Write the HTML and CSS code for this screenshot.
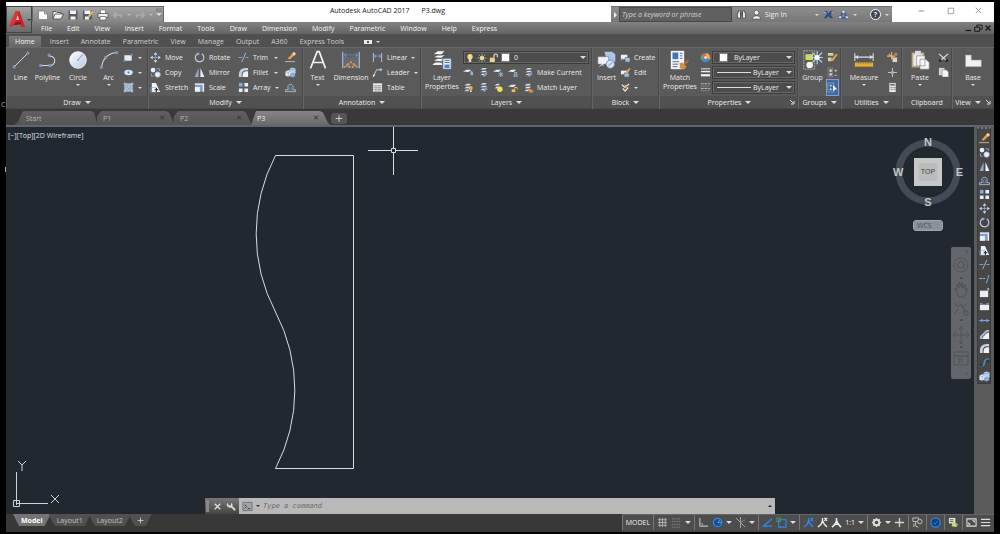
FILE: index.html
```html
<!DOCTYPE html>
<html lang="en">
<head>
<meta charset="utf-8">
<title>Autodesk AutoCAD 2017 - P3.dwg</title>
<link rel="stylesheet" href="styles.css">
</head>
<body>
<svg class="sprite" aria-hidden="true">
  <defs>
    <linearGradient id="ball" x1="0" y1="0" x2="1" y2="1"><stop offset="0" stop-color="#fff"/><stop offset="1" stop-color="#b5c9de"/></linearGradient>
  </defs>
  <!-- quick access -->
  <symbol id="new" viewBox="0 0 12 12"><path d="M1.5 2h6l3 3v5.5h-9z" fill="#fafafa" stroke="#666" stroke-width=".6"/><path d="M7.5 2v3h3" fill="#bbb" stroke="#666" stroke-width=".6"/></symbol>
  <symbol id="open" viewBox="0 0 12 12"><path d="M1 10V2.5h3l1 1h4V5" fill="#eee" stroke="#444" stroke-width=".8"/><path d="M1 10l2-5h8.500l-2.500 5z" fill="#f5f5f5" stroke="#444" stroke-width=".8"/></symbol>
  <symbol id="save" viewBox="0 0 12 12"><path d="M1.500 1.500h9v9h-9z" fill="#555d68"/><path d="M3 1.500h6v3.500H3zM3.500 7.500h5v3h-5z" fill="#f4f4f4"/></symbol>
  <symbol id="saveas" viewBox="0 0 12 12"><path d="M1 1.500h9v9H1z" fill="#555d68"/><path d="M2.500 1.500h6V5h-6zM3 7.500h4v3H3z" fill="#f4f4f4"/><path d="M5 8l5-6 1.500 1L7 9z" fill="#efb75b"/></symbol>
  <symbol id="print" viewBox="0 0 12 12"><path d="M3.500 1h5v4h-5z" fill="#fff" stroke="#555" stroke-width=".5"/><path d="M1 4.500h10v4H1z" fill="#eee" stroke="#444" stroke-width=".7"/><path d="M3 7.500h6v3.500H3z" fill="#fff" stroke="#555" stroke-width=".7"/></symbol>
  <symbol id="undo" viewBox="0 0 12 12"><path d="M4.500 3L1.500 6l3 3M2 6h7v2.500" fill="none" stroke="#aeaeae" stroke-width="1.500"/></symbol>
  <symbol id="redo" viewBox="0 0 12 12"><path d="M7.500 3l3 3-3 3M10 6H3v2.500" fill="none" stroke="#aeaeae" stroke-width="1.500"/></symbol>
  <symbol id="binoc" viewBox="0 0 12 12"><path d="M1.500 10V5.500L3 2h2v8zM10.500 10V5.500L9 2H7v8zM5 4.500h2v2H5z" fill="#e8e8e8" stroke="#333" stroke-width=".8"/></symbol>
  <symbol id="person" viewBox="0 0 12 12"><circle cx="6" cy="4" r="2.600" fill="#f2f2f2" stroke="#444" stroke-width=".7"/><path d="M1.500 11q0-3 3-3.500h3q3 .5 3 3.500z" fill="#f2f2f2" stroke="#444" stroke-width=".7"/></symbol>
  <symbol id="exchange" viewBox="0 0 12 12"><path d="M1 2h3l2 2.500L8 2h3L8.500 6 11 10H8L6 7.500 4 10H1l2.500-4z" fill="#2f4d83"/><path d="M1 3.500h2l1 2M11 3.500H9" stroke="#dbe5f5" stroke-width=".7" fill="none"/></symbol>
  <symbol id="a360" viewBox="0 0 12 12"><path d="M6 2L2 9.500h8z" fill="none" stroke="#33548d" stroke-width="1.500"/><circle cx="6" cy="3" r="1.800" fill="#dde6f3" stroke="#33548d" stroke-width=".6"/><circle cx="2.300" cy="9" r="1.600" fill="#dde6f3" stroke="#33548d" stroke-width=".6"/><circle cx="9.700" cy="9" r="1.600" fill="#dde6f3" stroke="#33548d" stroke-width=".6"/></symbol>
  <!-- draw -->
  <symbol id="line" viewBox="0 0 24 24"><path d="M4 20L20 4" stroke="#d8d8d8" stroke-width="1.200"/><path d="M2.500 19h2.500v2.500H2.500zM19 2.500h2.500V5H19z" fill="#5d7fae" stroke="#9bb7dc" stroke-width=".7"/></symbol>
  <symbol id="pline" viewBox="0 0 24 24"><path d="M3 18.500h11.500a5.600 5.600 0 0 0 0-11.200L13 6" fill="none" stroke="#d8d8d8" stroke-width="1.300"/><path d="M2 17.500h2.500V20H2zM13 17.500h2.500V20H13zM12 5h2.500v2.500H12z" fill="#5d7fae" stroke="#9bb7dc" stroke-width=".7"/></symbol>
  <symbol id="circle" viewBox="0 0 24 24"><circle cx="12" cy="12" r="10" fill="url(#ball)" stroke="#f6f6f6"/><path d="M12 12l6-7" stroke="#6289b8" stroke-width="1"/><circle cx="12" cy="12" r="1" fill="#6289b8"/></symbol>
  <symbol id="arc" viewBox="0 0 24 24"><path d="M3 21Q5 5 21 3" fill="none" stroke="#d8d8d8" stroke-width="1.300"/><path d="M1.500 19.500H4V22H1.500zM7 7.500h2.500V10H7zM20 2h2.500v2.500H20z" fill="#5d7fae" stroke="#9bb7dc" stroke-width=".7"/></symbol>
  <symbol id="rect" viewBox="0 0 12 12"><path d="M1.500 3.500h8v6h-8z" fill="#e6edf5"/><path d="M8.500 2h2v2h-2zM.5 8.500h2v2h-2z" fill="#6d94c8"/></symbol>
  <symbol id="ellipse" viewBox="0 0 12 12"><ellipse cx="6" cy="6" rx="4.700" ry="3" fill="#dfe9f3"/><path d="M5 5h2v2H5zM.3 5h1.500v2H.3zM10.200 5h1.500v2h-1.500zM5 2h2v1.500H5z" fill="#5580ba"/></symbol>
  <symbol id="hatch" viewBox="0 0 12 12"><path d="M2 2h8v8H2z" fill="#86a4cb"/><path d="M2 5l3-3M2 8l6-6M2 10l8-8M5 10l5-5M8 10l2-2M.5 2h11M.5 10h11M2 .5v11M10 .5v11" stroke="#dce6f2" stroke-width=".7"/></symbol>
  <!-- modify -->
  <symbol id="move" viewBox="0 0 12 12"><path d="M6 .3L8 3H4zM6 11.700L8 9H4zM.3 6L3 4v4zM11.700 6L9 4v4z" fill="#dce7f5"/><path d="M6 3v6M3 6h6" stroke="#86a9d8" stroke-width=".8"/><path d="M5 5h2v2H5z" fill="#7aa0d2"/></symbol>
  <symbol id="copy" viewBox="0 0 12 12"><circle cx="3.300" cy="3.300" r="2.600" fill="#e9eff6"/><circle cx="8.300" cy="8.300" r="3" fill="#e9eff6" stroke="#8aa8ce" stroke-width=".8"/><path d="M7 2h3.500v2.500M1.500 7v3H4" fill="none" stroke="#8aa8ce"/></symbol>
  <symbol id="stretch" viewBox="0 0 12 12"><path d="M2 1h4.500L11 11H2z" fill="#edf2f7"/><path d="M1 6h6v5H1z" fill="none" stroke="#87a7cf" stroke-width=".7"/><path d="M5 8.500h4M7 6.500v4" stroke="#222" stroke-width="1.200"/></symbol>
  <symbol id="rotate" viewBox="0 0 12 12"><path d="M8.500 2A4.700 4.700 0 1 1 4 1.800" fill="none" stroke="#c7d3e3" stroke-width="1.200"/><path d="M3 .2l3.500 1.300L4 4z" fill="#8fb0dc"/></symbol>
  <symbol id="mirror" viewBox="0 0 12 12"><path d="M5 1v10H.7z" fill="#8faac9"/><path d="M7 1v10h4.300z" fill="#edf2f7"/></symbol>
  <symbol id="scale" viewBox="0 0 12 12"><path d="M1 1.500h10v9H1z" fill="#7e9fca"/><path d="M1 1.500h10V3H1zM9.500 1.500H11v9H9.500zM1 5.500h5.500v5H1z" fill="#edf2f7"/></symbol>
  <symbol id="trim" viewBox="0 0 12 12"><path d="M.5 6h4M8 6h3.500" stroke="#6fa0e0" stroke-width="1.200"/><path d="M4 11L8.500 1" stroke="#aeb9c7" stroke-width="1"/></symbol>
  <symbol id="fillet" viewBox="0 0 12 12"><path d="M1 11V8.500Q1 1 8.500 1H11v2.500H9Q4 3.500 4 9v2z" fill="#c3d3e6"/><path d="M5 11V9q0-4.500 4.500-4.500H11V11z" fill="#f0f3f6"/></symbol>
  <symbol id="array" viewBox="0 0 12 12"><path d="M1 1h4v4H1z" fill="#7eabe4"/><path d="M7 1h4v4H7zM1 7h4v4H1zM7 7h4v4H7z" fill="#e6edf5"/></symbol>
  <symbol id="erase" viewBox="0 0 12 12"><path d="M3 7l6.500-7L12 2 5 8.500z" fill="#e9a24c"/><path d="M8 2l1.500-2L12 2l-2 2z" fill="#f6d79a"/><path d="M1.500 9.500L3 7l2 1.500z" fill="#c23e32"/><path d="M0 10.500h11" stroke="#c8c8c8" stroke-width=".9"/></symbol>
  <symbol id="explode" viewBox="0 0 12 12"><path d="M5 2l3-1.500 3.500 1V7L8 8.500 5 7z" fill="#b9d0eb"/><path d="M.5 5l3-1.500 3 1V9l-3 1.500-3-1z" fill="#e4eef9"/><path d="M5.500 7l3-1 2.500 1v3L8 11.500 5.500 10z" fill="#89aedb"/><path d="M.5 5l3 1 3-1.500M3.500 6v4.500M5 2l3 1 3.500-1.500" stroke="#5f82ad" stroke-width=".5" fill="none"/></symbol>
  <symbol id="offset" viewBox="0 0 12 12"><path d="M.5 10.500v-2h3q-1.500-6 2.500-6t2.500 6h3v2z" fill="none" stroke="#a7bad2" stroke-width="1"/><path d="M5 8.500q-.5-4 1-4t1 4z" fill="none" stroke="#6685ae" stroke-width=".9"/></symbol>
  <!-- annotation -->
  <symbol id="text" viewBox="0 0 24 24"><path d="M3 22L11 2h2.500L21 22M6 15h12" fill="none" stroke="#f1f1f1" stroke-width="2"/></symbol>
  <symbol id="dim" viewBox="0 0 24 24"><path d="M2 8h20v14H2z" fill="#68696c"/><path d="M2 2v20M22 2v20" stroke="#9eb7d6" stroke-width="1.500"/><path d="M3 6h18M3 6l3-2v4zM21 6l-3-2v4z" stroke="#6088bd" fill="#6088bd"/><path d="M4 21l1.500-1.500M8 16l1.500 1.500M12 13.500v2.500M16 16l-1.500 1.500M20 21l-1.500-1.500M9 21l2-1.500M15 21l-2-1.500M6 18.500h2M16 18.500h2" stroke="#e0a05a" stroke-width="2" fill="none"/></symbol>
  <symbol id="linear" viewBox="0 0 12 12"><path d="M1.500 1v10M10.500 1v10" stroke="#b9cce2" stroke-width="1"/><path d="M2 4.500h8M2 4.500l2-1.500v3zM10 4.500L8 3v3z" fill="#6f99d0" stroke="#6f99d0" stroke-width=".8"/></symbol>
  <symbol id="leader" viewBox="0 0 12 12"><path d="M1.500 10.500L5 3h3" fill="none" stroke="#d8d8d8" stroke-width="1"/><path d="M.7 11.500L1.500 8l2 1z" fill="#eee"/><circle cx="9.500" cy="3" r="1.600" fill="#9cbae0"/></symbol>
  <symbol id="table" viewBox="0 0 12 12"><path d="M1 1.500h10v9H1z" fill="#f2f2f2"/><path d="M1 4h10M1 6.300h10M1 8.500h10M4.300 4v6.500M7.700 4v6.500" stroke="#777" stroke-width=".7"/></symbol>
  <!-- layers -->
  <symbol id="layerprops" viewBox="0 0 24 24"><path d="M1 13l6-3h9l-5 4zM1 9l6-3h9l-5 4zM1 5l6-4h9l-5 5z" fill="#fafafa" stroke="#444" stroke-width=".8"/><path d="M1 17l3-2h6l2 1v2H1z" fill="#f2f2f2"/><path d="M13 10h10v13H13z" fill="#e9eef5" stroke="#556a85"/><path d="M15 12.500h6M15 15h6" stroke="#51719b" stroke-width="1.200"/><path d="M15 17.500h6v4h-6z" fill="#4f7db8"/></symbol>
  <symbol id="lay1" viewBox="0 0 12 12"><path d="M0 5l4-2h5L6 5.500z" fill="#f1f1f1"/><path d="M8 4q3 0 3 3v2H8V7z" fill="#8badda"/></symbol>
  <symbol id="lay2" viewBox="0 0 12 12"><path d="M2 3l3-2h5L8 3zM2 6l3-2h5L8 6zM2 9l3-2h5L8 9z" fill="#eef1f5" stroke="#445" stroke-width=".4"/><path d="M5 10l5-5v3l-3 3z" fill="#77a0d6"/></symbol>
  <symbol id="lay3" viewBox="0 0 12 12"><path d="M1 4l3-2h5L7 4zM1 7l3-2h5L7 7zM1 10l3-2h3L6 10z" fill="#eef1f5" stroke="#445" stroke-width=".4"/><circle cx="8.500" cy="6.500" r="2.200" fill="#e7b14f"/><path d="M7.500 9h2v2h-2z" fill="#ddd"/></symbol>
  <symbol id="lay4" viewBox="0 0 12 12"><path d="M0 5l4-2h5L6 5.500z" fill="#f1f1f1"/><path d="M4 8h4v3H4z" fill="#f0c04d"/><path d="M7 8V6h3v2" stroke="#f0c04d" fill="none"/></symbol>
  <symbol id="lay5" viewBox="0 0 12 12"><path d="M0 5l4-2h5L6 5.500z" fill="#f1f1f1"/><path d="M8.500 5v6M6 6.500l5 3M11 6.500l-5 3" stroke="#8fc0f0" stroke-width="1"/></symbol>
  <symbol id="lay6" viewBox="0 0 12 12"><path d="M0 5l4-2h5L6 5.500z" fill="#f1f1f1"/><path d="M6 7.500h4.500V11H6z" fill="#7f97b3"/><path d="M7 7.500V6h2.500v1.500" stroke="#aebdcd" fill="none"/></symbol>
  <symbol id="lay7" viewBox="0 0 12 12"><path d="M1 4l3-2h4L6 4zM1 7l3-2h4L6 7z" fill="#eef1f5" stroke="#445" stroke-width=".4"/><circle cx="7.500" cy="8" r="3" fill="#f3e24c"/></symbol>
  <symbol id="lay8" viewBox="0 0 12 12"><path d="M1 4l3-2h5L7 4zM1 7l3-2h5L7 7zM1 10l3-2h3L6 10z" fill="#eef1f5" stroke="#445" stroke-width=".4"/><path d="M6 7l3 1 2.500 2-1 1.500H7z" fill="#d9913f"/></symbol>
  <symbol id="bulb" viewBox="0 0 12 12"><circle cx="6" cy="4.500" r="3.200" fill="#f6da83"/><path d="M4.500 7h3v4h-3z" fill="#e4dcc0"/></symbol>
  <symbol id="sun" viewBox="0 0 12 12"><circle cx="6" cy="6" r="2.500" fill="#f3e5a5"/><path d="M6 .5v11M.5 6h11M2 2l8 8M10 2l-8 8" stroke="#e7dba7" stroke-width=".7"/></symbol>
  <symbol id="lock" viewBox="0 0 12 12"><path d="M1 5.500h6V11H1z" fill="#efd27a"/><path d="M6 5.500V3q0-1.800 2-1.800T10 3v2" fill="none" stroke="#ece1bd" stroke-width="1.300"/></symbol>
  <!-- block, properties -->
  <symbol id="insert" viewBox="0 0 24 24"><path d="M9 2h9l4 3v9H12z" fill="#a9c6e6"/><path d="M1 8h13v9H1z" fill="#edf2f8" stroke="#667" stroke-width=".6"/><circle cx="16" cy="17" r="5" fill="#d2e1f1" stroke="#6483a8"/><path d="M3 20l4-4v3" stroke="#fff" fill="none"/><path d="M13.500 19l5-4" stroke="#6483a8"/></symbol>
  <symbol id="create" viewBox="0 0 12 12"><path d="M1 3h7v5H1z" fill="#edf1f6"/><path d="M5.500 6H11v5H5.500z" fill="#a5bfdf" stroke="#555" stroke-width=".6"/><path d="M0 10l3-3" stroke="#6d96cd"/></symbol>
  <symbol id="edit" viewBox="0 0 12 12"><path d="M1 4h7v4H1z" fill="#edf1f6"/><path d="M4.500 6.500H10v4.500H4.500z" fill="#a5bfdf" stroke="#555" stroke-width=".6"/><path d="M6 6l4-5 1.500 1L8 7z" fill="#e7a851"/></symbol>
  <symbol id="attr" viewBox="0 0 12 12"><path d="M2 3l3.500 3L10 2M3 7l2.500 3L9 6" fill="none" stroke="#eee" stroke-width="1.300"/><path d="M4 5l2-2 2 2-2 2z" fill="#e9b864"/></symbol>
  <symbol id="match" viewBox="0 0 24 24"><path d="M1 1h16v22H1z" fill="#f3f5f8"/><path d="M3 3h7v8H3z" fill="#3e76bd"/><path d="M12 4h3M12 7h3M12 10h3M3 14h8M3 17h7M3 20h6" stroke="#627082" stroke-width="1.200"/><path d="M11 16l4-1 5 5-3 3q-4 0-6-2 2-2 0-5z" fill="#d78f38"/><path d="M17 15l4-4 2 2-4 5z" fill="#a8692c"/></symbol>
  <symbol id="wheel" viewBox="0 0 12 12"><path d="M6 6V1a5 5 0 0 1 4.500 7.500z" fill="#f0ad3e"/><path d="M6 6l4.500 2.500a5 5 0 0 1-9 0z" fill="#4c82d0"/><path d="M6 6L1.500 8.500A5 5 0 0 1 6 1z" fill="#d66262"/><path d="M6 6L2 3a5 5 0 0 0-.5 5.500z" fill="#58aa63"/><circle cx="6" cy="6" r="1.500" fill="#eee"/></symbol>
  <symbol id="weight" viewBox="0 0 12 12"><path d="M1 2h10" stroke="#eee"/><path d="M1 5h10" stroke="#eee" stroke-width="1.600"/><path d="M1 9h10" stroke="#eee" stroke-width="2.500"/></symbol>
  <symbol id="ltype" viewBox="0 0 12 12"><path d="M1 2h10M1 7h10" stroke="#ccc" stroke-dasharray="3 1"/><path d="M1 4.500h10M1 9.500h10" stroke="#aaa" stroke-dasharray="1 1"/></symbol>
  <!-- groups, utilities, clipboard, view -->
  <symbol id="group" viewBox="0 0 24 24"><path d="M1 1h13v22H1z" fill="none" stroke="#bbb" stroke-dasharray="2 1"/><path d="M3 5h9v7H3z" fill="#cfdc58"/><circle cx="8" cy="18" r="4" fill="#eef3f8"/><path d="M17 1v16M9 9h15M11 3l12 12M23 3L11 15" stroke="#a8d3f3" stroke-width="1.400"/><circle cx="17" cy="9" r="3" fill="#fff"/></symbol>
  <symbol id="ungroup" viewBox="0 0 12 12"><path d="M1 1h6v3H1zM1 6h4v4H1z" fill="#d6d09c"/><path d="M4 9l6-7 1.500 1-5 7z" fill="#e3a44e"/></symbol>
  <symbol id="groupedit" viewBox="0 0 12 12"><path d="M1 1h5v10H1z" fill="none" stroke="#aaa" stroke-dasharray="1 1"/><path d="M3 3h2v2H3zM3 7h2v2H3zM8 4h3M9.500 2.500v3M8 9h3" stroke="#ccc" fill="#ddd" stroke-width=".8"/></symbol>
  <symbol id="groupsel" viewBox="0 0 12 12"><path d="M1 1h6v10H1z" fill="none" stroke="#b7c8e2" stroke-dasharray="1 1"/><path d="M3 3h2v2H3zM3 7h2v2H3z" fill="#d4e59c"/><path d="M6.500 3l4.500 5-2.300.3L7 10.500z" fill="#fff"/></symbol>
  <symbol id="measure" viewBox="0 0 24 24"><path d="M1 4v9M23 4v9M1 8.500h22" stroke="#ddd" stroke-width="1.300"/><path d="M1 8.500L5 6v5zM23 8.500L19 6v5z" fill="#ddd"/><path d="M1 15h22v5H1z" fill="#e8ae2d"/><path d="M5 15v2M8 15v2M11 15v2M14 15v2M17 15v2M20 15v2" stroke="#89631a" stroke-width=".7"/></symbol>
  <symbol id="qselect" viewBox="0 0 12 12"><path d="M5 0v8M0 4.500h9M2 2l5 5" stroke="#e9b56e" stroke-width="1.200"/><path d="M6 6h5v5H6z" fill="#d5d5d5"/><path d="M8 1h3v3H8z" fill="#da7c39"/></symbol>
  <symbol id="point" viewBox="0 0 12 12"><path d="M6 1v10M1 6h10" stroke="#ccc"/><path d="M4.500 4.500h3v3h-3z" fill="#aaa"/></symbol>
  <symbol id="calc" viewBox="0 0 12 12"><path d="M2.500 1h7v10h-7z" fill="#e7e7e7"/><path d="M3.500 2h5v2h-5z" fill="#67727d"/><path d="M4 6h1M6 6h1M8 6h1M4 8h1M6 8h1M8 8h1" stroke="#555"/></symbol>
  <symbol id="paste" viewBox="0 0 24 24"><path d="M2 3h15v18H2z" fill="#bba98a"/><path d="M6 1h7v4H6z" fill="#ddd"/><path d="M4 5h11v14H4z" fill="#e8e8e8"/><path d="M8 7h10v12H8zM12 11h7l4 4v8H12z" fill="#f6f6f6" stroke="#777" stroke-width=".7"/></symbol>
  <symbol id="cut" viewBox="0 0 12 12"><path d="M1 2l8 7M11 2L3 9" stroke="#ddd" stroke-width="1.200"/><circle cx="2.500" cy="9.500" r="1.500" fill="#222"/><circle cx="9.500" cy="9.500" r="1.500" fill="#222"/></symbol>
  <symbol id="pages" viewBox="0 0 12 12"><path d="M1 1h6v8H1z" fill="#d5d5d5"/><path d="M4.500 3H9l2.500 2.500V11h-7z" fill="#f5f5f5" stroke="#666" stroke-width=".5"/></symbol>
  <symbol id="base" viewBox="0 0 24 24"><path d="M3 6h7v6h12v8H3z" fill="#f0f0f0" stroke="#999" stroke-width=".7"/></symbol>
  <symbol id="extend" viewBox="0 0 12 12"><path d="M.5 6h6" stroke="#b9c7d8" stroke-dasharray="3 1"/><path d="M8 11l3-9" stroke="#6fa0e0" stroke-width="1.200"/></symbol>
  <symbol id="break" viewBox="0 0 12 12"><path d="M1 4h10v6H1z" fill="#e8eef5"/><path d="M1 3h3M8 3h3" stroke="#86a9d8"/></symbol>
  <symbol id="breakpt" viewBox="0 0 12 12"><path d="M1 4h9v7H1z" fill="#e8eef5"/><path d="M9 1h2v3H9z" fill="#86a9d8"/></symbol>
  <symbol id="join" viewBox="0 0 12 12"><path d="M.5 6h11" stroke="#86a9d8" stroke-width="1.200"/><path d="M2.500 4L6 6 2.500 8zM9.500 4L6 6l3.500 2z" fill="#6fa0e0"/></symbol>
  <symbol id="chamfer" viewBox="0 0 12 12"><path d="M1 11V8l7-7h3v2H9L3.500 8.500V11z" fill="#a9bfd9"/><path d="M4 11V9l5-5h2v7z" fill="#f0f3f6"/></symbol>
  <symbol id="blend" viewBox="0 0 12 12"><path d="M1 9q4 2 5-3t5-3" fill="none" stroke="#5683b5" stroke-width="2"/><path d="M1 7h3v3H1zM8 3h3v3H8z" fill="#293a4e"/></symbol>
  <!-- status bar -->
  <symbol id="s-grid" viewBox="0 0 12 12"><path d="M3 1v10M6 1v10M9 1v10M1 3h10M1 6h10M1 9h10" stroke="#c9c9c9" stroke-width=".8"/></symbol>
  <symbol id="s-snap" viewBox="0 0 12 12"><path d="M1 2h10M1 5h10M1 8h10M1 11h10" stroke="#9a9a9a" stroke-dasharray="1 1"/></symbol>
  <symbol id="s-ortho" viewBox="0 0 12 12"><path d="M2 1v9h9" fill="none" stroke="#bbb" stroke-width="1.200"/><path d="M2 7h3v3" fill="none" stroke="#999"/></symbol>
  <symbol id="s-polar" viewBox="0 0 12 12"><circle cx="6" cy="6" r="4.500" fill="#1c4d83" stroke="#278cf0" stroke-width="1.300"/><path d="M6 6h5M6 6l3-3" stroke="#45a0ff"/></symbol>
  <symbol id="s-iso" viewBox="0 0 12 12"><path d="M1 1l10 10M6 0v12" stroke="#aaa"/><path d="M6 6l5-3" stroke="#8b8b8b"/></symbol>
  <symbol id="s-track" viewBox="0 0 12 12"><path d="M11 2L1.500 10H11" fill="none" stroke="#278cf0" stroke-width="1.400"/></symbol>
  <symbol id="s-osnap" viewBox="0 0 12 12"><path d="M3 3h8v8H3z" fill="none" stroke="#278cf0" stroke-width="1.200"/><path d="M1 1h4v4H1z" fill="none" stroke="#37a565"/></symbol>
  <symbol id="s-ann" viewBox="0 0 12 12"><path d="M6 1v4M6 4L4.500 8 1 11M6 4l2 4 3 3M3 8h6" fill="none" stroke="currentColor" stroke-width="1.700"/></symbol>
  <symbol id="s-anb" viewBox="0 0 12 12"><path d="M6 1v4M6 4L4.500 8 1 11M6 4l2 4 3 3M8 1l3 3M11 1L8 4" fill="none" stroke="currentColor" stroke-width="1.500"/></symbol>
  <symbol id="gear" viewBox="0 0 12 12"><circle cx="6" cy="6" r="3" fill="none" stroke="#ddd" stroke-width="2"/><path d="M6 1v2M6 9v2M1 6h2M9 6h2M2.500 2.500L4 4M8 8l1.500 1.500M9.500 2.500L8 4M4 8L2.500 9.500" stroke="#ddd" stroke-width="1.500"/></symbol>
  <symbol id="plus" viewBox="0 0 12 12"><path d="M6 1v10M1 6h10" stroke="#d5d5d5" stroke-width="1.400"/></symbol>
  <symbol id="s-iso2" viewBox="0 0 12 12"><path d="M1 1h6v4H1zM4 5v5l3 1" fill="none" stroke="#c5c5c5"/><circle cx="8.500" cy="5" r="2.500" fill="#555" stroke="#c5c5c5"/><path d="M2 7v4" stroke="#c5c5c5"/></symbol>
  <symbol id="s-hw" viewBox="0 0 12 12"><circle cx="6" cy="6" r="5" fill="#123f75" stroke="#268cf2" stroke-width="1.300"/><path d="M3.500 6l2 2 3-4" fill="none" stroke="#268cf2"/></symbol>
  <symbol id="s-img" viewBox="0 0 12 12"><path d="M1 1h7v6H1z" fill="#e5e5e5"/><path d="M2 3h4M2 5h4" stroke="#456"/><path d="M5 5l6 3-2 3-5-1z" fill="#d9df48"/><path d="M8 7l3 1-2 3z" fill="#5bb4e4"/></symbol>
  <symbol id="s-full" viewBox="0 0 12 12"><path d="M1 2h10v8H1z" fill="none" stroke="#ddd" stroke-width="1.200"/><path d="M6.500 3.500h3v3zM5.500 8.500h-3v-3z" fill="#ddd"/></symbol>
  <symbol id="s-menu" viewBox="0 0 12 12"><path d="M1 2.500h10M1 6h10M1 9.500h10" stroke="#ddd" stroke-width="1.300"/></symbol>
</svg>

<div class="desktop">
<div class="gutter" aria-hidden="true"><span>C</span><i></i></div>
<div class="app">
  <header class="head">
    <button class="logo" aria-label="Application menu">
      <svg class="mark" viewBox="0 0 18 18"><path d="M0 17L7 0h4l6 17h-4l-1.500-4H6l-2 3z" fill="#c9242b"/><path d="M7 9.500L9 4l2 5.500z" fill="#d6c6c7"/><path d="M7 0h4L6 13l-6 4z" fill="#e0343a"/><path d="M6 13l5-2 2 3-8 1z" fill="#8e1119"/></svg>
      <i class="caret dark"></i>
    </button>
    <div class="titlebar">
      <div class="qat">
        <button aria-label="New"><svg><use href="#new"/></svg></button>
        <button aria-label="Open"><svg><use href="#open"/></svg></button>
        <button aria-label="Save"><svg><use href="#save"/></svg></button>
        <button aria-label="Save as"><svg><use href="#saveas"/></svg></button>
        <button aria-label="Plot"><svg><use href="#print"/></svg></button>
        <button aria-label="Undo"><svg><use href="#undo"/></svg></button><i class="caret dim"></i>
        <button aria-label="Redo"><svg><use href="#redo"/></svg></button><i class="caret dim"></i>
        <button class="customize" aria-label="Customize"><i class="caret big"></i></button>
      </div>
      <div class="title"><span>Autodesk AutoCAD 2017</span><span>P3.dwg</span></div>
      <div class="info">
        <button class="expand" aria-label="Collapse search"><i class="side"></i></button>
        <input class="search" type="text" aria-label="Search help" placeholder="Type a keyword or phrase">
        <button aria-label="Search"><svg><use href="#binoc"/></svg></button>
        <button class="signin"><svg><use href="#person"/></svg><span>Sign In</span><i class="caret"></i></button>
        <button aria-label="Exchange"><svg><use href="#exchange"/></svg></button>
        <button aria-label="A360"><svg><use href="#a360"/></svg></button><i class="caret"></i>
        <button class="help" aria-label="Help"><span>?</span></button><i class="caret"></i>
      </div>
      <div class="winctl">
        <button aria-label="Minimize"><svg viewBox="0 0 12 12"><path d="M3 6.500h6" stroke="#888"/></svg></button>
        <button aria-label="Maximize"><svg viewBox="0 0 12 12"><path d="M3.500 3.500h6v6h-6z" fill="none" stroke="#999"/></svg></button>
        <button aria-label="Close"><svg viewBox="0 0 12 12"><path d="M3 3l6 6M9 3l-6 6" stroke="#777" stroke-width=".8"/></svg></button>
      </div>
    </div>
    <nav class="menubar">
      <button>File</button><button>Edit</button><button>View</button><button>Insert</button><button>Format</button><button>Tools</button><button>Draw</button><button>Dimension</button><button>Modify</button><button>Parametric</button><button>Window</button><button>Help</button><button>Express</button>
      <div class="docctl">
        <button aria-label="Minimize drawing"><svg viewBox="0 0 12 12"><path d="M3 9h7" stroke="#1b1b1b" stroke-width="1.500"/></svg></button>
        <button aria-label="Restore drawing"><svg viewBox="0 0 12 12"><path d="M2 5h6v5H2zM4.500 5V2.500H11v5H8" fill="none" stroke="#1b1b1b" stroke-width="1.200"/></svg></button>
        <button aria-label="Close drawing"><svg viewBox="0 0 12 12"><path d="M3 3l6 6M9 3l-6 6" stroke="#1b1b1b" stroke-width="1.700"/></svg></button>
      </div>
    </nav>
  </header>

  <nav class="tabs">
    <button class="on">Home</button><button>Insert</button><button>Annotate</button><button>Parametric</button><button>View</button><button>Manage</button><button>Output</button><button>A360</button><button>Express Tools</button>
    <button class="mini" aria-label="Minimize ribbon"><svg viewBox="0 0 8 6"><path d="M0 1h8v4H0z" fill="#eee"/><path d="M3 2h2v2H3z" fill="#555"/></svg><i class="caret"></i></button>
  </nav>

  <main class="ribbon">
    <section class="panel">
      <div class="body">
        <button class="big w27"><svg><use href="#line"/></svg>Line</button>
        <button class="big w27"><svg><use href="#pline"/></svg>Polyline</button>
        <button class="big w34"><svg><use href="#circle"/></svg>Circle<i class="caret"></i></button>
        <button class="big w27"><svg><use href="#arc"/></svg>Arc<i class="caret"></i></button>
        <div class="col">
          <button class="sm" aria-label="Rectangle"><svg><use href="#rect"/></svg><i class="caret"></i></button>
          <button class="sm" aria-label="Ellipse"><svg><use href="#ellipse"/></svg><i class="caret"></i></button>
          <button class="sm" aria-label="Hatch"><svg><use href="#hatch"/></svg><i class="caret"></i></button>
        </div>
      </div>
      <h2>Draw<i class="caret big"></i></h2>
    </section>
    <section class="panel">
      <div class="body">
        <div class="col w44">
          <button class="sm"><svg><use href="#move"/></svg>Move</button>
          <button class="sm"><svg><use href="#copy"/></svg>Copy</button>
          <button class="sm"><svg><use href="#stretch"/></svg>Stretch</button>
        </div>
        <div class="col w44">
          <button class="sm"><svg><use href="#rotate"/></svg>Rotate</button>
          <button class="sm"><svg><use href="#mirror"/></svg>Mirror</button>
          <button class="sm"><svg><use href="#scale"/></svg>Scale</button>
        </div>
        <div class="col w47 split">
          <button class="sm"><svg><use href="#trim"/></svg>Trim<i class="caret"></i></button>
          <button class="sm"><svg><use href="#fillet"/></svg>Fillet<i class="caret"></i></button>
          <button class="sm"><svg><use href="#array"/></svg>Array<i class="caret"></i></button>
        </div>
        <div class="col">
          <button class="sm" aria-label="Erase"><svg><use href="#erase"/></svg></button>
          <button class="sm" aria-label="Explode"><svg><use href="#explode"/></svg></button>
          <button class="sm" aria-label="Offset"><svg><use href="#offset"/></svg></button>
        </div>
      </div>
      <h2>Modify<i class="caret big"></i></h2>
    </section>
    <section class="panel">
      <div class="body">
        <button class="big w27"><svg><use href="#text"/></svg>Text<i class="caret"></i></button>
        <button class="big w40"><svg><use href="#dim"/></svg>Dimension</button>
        <div class="col w47 split">
          <button class="sm"><svg><use href="#linear"/></svg>Linear<i class="caret"></i></button>
          <button class="sm"><svg><use href="#leader"/></svg>Leader<i class="caret"></i></button>
          <button class="sm"><svg><use href="#table"/></svg>Table</button>
        </div>
      </div>
      <h2>Annotation<i class="caret big"></i></h2>
    </section>
    <section class="panel">
      <div class="body">
        <button class="big w40"><svg><use href="#layerprops"/></svg>Layer<br>Properties</button>
        <div class="col grow">
          <div class="combo">
            <svg><use href="#bulb"/></svg><svg><use href="#sun"/></svg><svg><use href="#lock"/></svg><i class="swatch"></i>
            <select aria-label="Layer"><option>0</option></select><i class="caret big"></i>
          </div>
          <div class="tools">
            <button class="sm" aria-label="Layer off"><svg><use href="#lay1"/></svg></button>
            <button class="sm" aria-label="Isolate"><svg><use href="#lay2"/></svg></button>
            <button class="sm" aria-label="Freeze"><svg><use href="#lay5"/></svg></button>
            <button class="sm" aria-label="Lock"><svg><use href="#lay6"/></svg></button>
            <button class="sm"><svg><use href="#lay2"/></svg>Make Current</button>
          </div>
          <div class="tools">
            <button class="sm" aria-label="Layers on"><svg><use href="#lay3"/></svg></button>
            <button class="sm" aria-label="Unisolate"><svg><use href="#lay2"/></svg></button>
            <button class="sm" aria-label="Thaw all"><svg><use href="#lay7"/></svg></button>
            <button class="sm" aria-label="Unlock"><svg><use href="#lay4"/></svg></button>
            <button class="sm"><svg><use href="#lay8"/></svg>Match Layer</button>
          </div>
        </div>
      </div>
      <h2>Layers<i class="caret big"></i></h2>
    </section>
    <section class="panel">
      <div class="body">
        <button class="big w27"><svg><use href="#insert"/></svg>Insert</button>
        <div class="col tight">
          <button class="sm"><svg><use href="#create"/></svg>Create</button>
          <button class="sm"><svg><use href="#edit"/></svg>Edit</button>
          <button class="sm" aria-label="Attributes"><svg><use href="#attr"/></svg><i class="caret"></i></button>
        </div>
      </div>
      <h2>Block<i class="caret big"></i></h2>
    </section>
    <section class="panel">
      <div class="body">
        <button class="big w40"><svg><use href="#match"/></svg>Match<br>Properties</button>
        <div class="col grow tight">
          <div class="prop"><svg><use href="#wheel"/></svg><div class="combo wide"><i class="swatch"></i><select aria-label="Color"><option>ByLayer</option></select><i class="caret big"></i></div></div>
          <div class="prop"><svg><use href="#weight"/></svg><div class="combo"><i class="rule"></i><select aria-label="Lineweight"><option>ByLayer</option></select><i class="caret big"></i></div></div>
          <div class="prop"><svg><use href="#ltype"/></svg><div class="combo"><i class="rule"></i><select aria-label="Linetype"><option>ByLayer</option></select><i class="caret big"></i></div></div>
        </div>
      </div>
      <h2 class="with-launch"><span>Properties</span><i class="caret big"></i><svg class="launch" viewBox="0 0 6 6"><path d="M1 1l3 3M5 2v3H2" fill="none" stroke="#ddd"/></svg></h2>
    </section>
    <section class="panel">
      <div class="body">
        <button class="big w27"><svg><use href="#group"/></svg>Group</button>
        <div class="col">
          <button class="sm" aria-label="Ungroup"><svg><use href="#ungroup"/></svg></button>
          <button class="sm" aria-label="Group edit"><svg><use href="#groupedit"/></svg></button>
          <button class="sm picked" aria-label="Group selection"><svg><use href="#groupsel"/></svg></button>
        </div>
      </div>
      <h2>Groups<i class="caret big"></i></h2>
    </section>
    <section class="panel">
      <div class="body">
        <button class="big w44"><svg><use href="#measure"/></svg>Measure<i class="caret"></i></button>
        <div class="col">
          <button class="sm" aria-label="Quick select"><svg><use href="#qselect"/></svg></button>
          <button class="sm" aria-label="ID point"><svg><use href="#point"/></svg></button>
          <button class="sm" aria-label="Calculator"><svg><use href="#calc"/></svg></button>
        </div>
      </div>
      <h2>Utilities<i class="caret big"></i></h2>
    </section>
    <section class="panel">
      <div class="body">
        <button class="big w34"><svg><use href="#paste"/></svg>Paste<i class="caret"></i></button>
        <div class="col">
          <button class="sm" aria-label="Cut"><svg><use href="#cut"/></svg></button>
          <button class="sm" aria-label="Copy clip"><svg><use href="#pages"/></svg></button>
        </div>
      </div>
      <h2>Clipboard</h2>
    </section>
    <section class="panel">
      <div class="body center">
        <button class="big w34"><svg><use href="#base"/></svg>Base<i class="caret"></i></button>
      </div>
      <h2>View<i class="caret big"></i><svg class="launch" viewBox="0 0 6 6"><path d="M1 1l3 3M5 2v3H2" fill="none" stroke="#ddd"/></svg></h2>
    </section>
  </main>

  <div class="files">
    <div class="file"><button>Start</button></div>
    <div class="file"><button>P1</button><button class="x" aria-label="Close P1">✕</button></div>
    <div class="file"><button>P2</button><button class="x" aria-label="Close P2">✕</button></div>
    <div class="file on"><button>P3</button><button class="x" aria-label="Close P3">✕</button></div>
    <button class="add" aria-label="New drawing"><svg><use href="#plus"/></svg></button>
  </div>

  <div class="work">
    <div class="canvas">
      <svg class="drawing" aria-label="Drawing">
        <g fill="none" stroke="#d9dde0">
          <path d="M269.500 28.500H347.500V341.500H269.500"/>
          <path d="M269.500 28.500A168 168 0 0 0 269.500 185A168 168 0 0 1 269.500 341.500"/>
          <path d="M362 23.500H385M389 23.500H412M387.500 0V21M387.500 26V48M385.500 21.500h4v4h-4z"/>
        </g>
      </svg>
      <div class="viewctl"><button>[−]</button><button>[Top]</button><button>[2D Wireframe]</button></div>
      <svg class="ucs" viewBox="0 0 50 48" aria-hidden="true"><g fill="none" stroke="#cfd3d6"><path d="M4.500 11V44M4.500 42.500H36M1.500 39.500h6v6h-6zM6 0l4 4 4-4M10 4v6M39 34l8 8M47 34l-8 8"/></g></svg>
      <div class="cube">
        <svg viewBox="0 0 68 68" aria-hidden="true"><circle cx="34" cy="34" r="29" fill="none" stroke="#444b54" stroke-width="7"/><path d="M20 20h28v28H20z" fill="#c6c8c8"/><path d="M25 25h18v18H25z" fill="#bbbdbd"/></svg>
        <button class="n">N</button><button class="w">W</button><button class="e">E</button><button class="s">S</button><button class="top">TOP</button>
      </div>
      <button class="wcs">WCS</button>
      <div class="navbar" aria-hidden="true">
        <svg viewBox="0 0 20 132"><g fill="none" stroke="#4f5459"><path d="M14 3l3 3M17 3l-3 3"/><circle cx="10" cy="18" r="7"/><circle cx="10" cy="18" r="3.500"/><path d="M6 46L3 41l3 2V37l2 4V35l2 5 1-5 1 6 2-4v6l2-2v3l-3 6H8zM3 56l4 4 3-3 4 8M16 56l-4 4M3 67l4-5M13 64h4v4h-4zM10 80v16M3 88h14M8 82l2-3 2 3M8 94l2 3 2-3M5 85l-3 3 3 3M15 85l3 3-3 3M3 105h14v4H3zM3 109h14v9H3zM8 111l4 2-4 3zM14 125l3 3"/></g><path d="M9 31h3M9 73h3M9 100h3" stroke="#444a50" stroke-width="1.500"/></svg>
      </div>
      <div class="command">
        <div class="grip"><i class="bar"></i>
          <button aria-label="Close"><svg viewBox="0 0 12 12"><path d="M3 3l6 6M9 3l-6 6" stroke="#ddd" stroke-width="1.500"/></svg></button>
          <button aria-label="Customize"><svg viewBox="0 0 12 12"><path d="M5 5l5 5" stroke="#ddd" stroke-width="2"/><path d="M2 2a3 3 0 1 0 4 0L5 5 3 5z" fill="#ddd"/></svg></button>
        </div>
        <svg viewBox="0 0 12 12"><path d="M1 1.500h10v9H1z" fill="#9ea4a9" stroke="#6d747a"/><path d="M3 4l2 2-2 2M6 8.500h3" fill="none" stroke="#333"/></svg><i class="caret dark"></i>
        <input type="text" aria-label="Command" placeholder="Type a command">
        <i class="up"></i>
      </div>
    </div>
    <aside class="side-tools">
      <div class="strip">
        <button aria-label="Erase"><svg><use href="#erase"/></svg></button>
        <button aria-label="Copy"><svg><use href="#copy"/></svg></button>
        <button aria-label="Mirror"><svg><use href="#mirror"/></svg></button>
        <button aria-label="Offset"><svg><use href="#offset"/></svg></button>
        <button aria-label="Array"><svg><use href="#array"/></svg></button>
        <button aria-label="Move"><svg><use href="#move"/></svg></button>
        <button aria-label="Rotate"><svg><use href="#rotate"/></svg></button>
        <button aria-label="Scale"><svg><use href="#scale"/></svg></button>
        <button aria-label="Stretch"><svg><use href="#stretch"/></svg></button>
        <button aria-label="Trim"><svg><use href="#trim"/></svg></button>
        <button aria-label="Extend"><svg><use href="#extend"/></svg></button>
        <button aria-label="Break at point"><svg><use href="#breakpt"/></svg></button>
        <button aria-label="Break"><svg><use href="#break"/></svg></button>
        <button aria-label="Join"><svg><use href="#join"/></svg></button>
        <button aria-label="Chamfer"><svg><use href="#chamfer"/></svg></button>
        <button aria-label="Fillet"><svg><use href="#fillet"/></svg></button>
        <button aria-label="Blend"><svg><use href="#blend"/></svg></button>
        <button aria-label="Explode"><svg><use href="#explode"/></svg></button>
      </div>
    </aside>
  </div>

  <footer class="foot">
    <div class="layouts">
      <button class="on">Model</button><button>Layout1</button><button>Layout2</button><button aria-label="New layout"><svg><use href="#plus"/></svg></button>
    </div>
    <div class="status">
      <div><button class="txt">MODEL</button></div>
      <div><button aria-label="Grid"><svg><use href="#s-grid"/></svg></button><button aria-label="Snap"><svg><use href="#s-snap"/></svg></button><i class="caret big"></i></div>
      <div><button aria-label="Ortho"><svg><use href="#s-ortho"/></svg></button><button aria-label="Polar"><svg><use href="#s-polar"/></svg></button><i class="caret big"></i><button aria-label="Isometric"><svg><use href="#s-iso"/></svg></button><i class="caret big"></i></div>
      <div><button aria-label="Object tracking"><svg><use href="#s-track"/></svg></button><button aria-label="Object snap"><svg><use href="#s-osnap"/></svg></button><i class="caret big"></i></div>
      <div><button class="blue" aria-label="Annotation visibility"><svg><use href="#s-anb"/></svg></button><button aria-label="Auto scale"><svg><use href="#s-anb"/></svg></button><button aria-label="Annotation scale"><svg><use href="#s-ann"/></svg></button><button class="txt">1:1</button><i class="caret big"></i></div>
      <div><button aria-label="Workspace"><svg><use href="#gear"/></svg></button><i class="caret big"></i><button aria-label="Monitor"><svg><use href="#plus"/></svg></button></div>
      <div><button aria-label="Isolate objects"><svg><use href="#s-iso2"/></svg></button></div>
      <div><button aria-label="Hardware acceleration"><svg><use href="#s-hw"/></svg></button></div>
      <div><button aria-label="Performance"><svg><use href="#s-img"/></svg></button></div>
      <div><button aria-label="Clean screen"><svg><use href="#s-full"/></svg></button><button aria-label="Customization"><svg><use href="#s-menu"/></svg></button></div>
    </div>
  </footer>
</div>
</div>
</body>
</html>
```
FILE: styles.css
```css
* { box-sizing: border-box; }
html, body { height: 100%; }
body { margin: 0; background: #000; color: #ececec; font: 7px/9px "Open Sans", "Noto Sans", sans-serif; }
button, input, select { font: inherit; color: inherit; background: none; border: 0; padding: 0; margin: 0; border-radius: 0; }
button { display: flex; align-items: center; white-space: nowrap; }
svg { display: block; width: 11px; height: 11px; flex: none; }
.sprite { position: absolute; width: 0; height: 0; }

.desktop { display: flex; min-height: 100vh; padding: 2px 6px 2px 0; }
.gutter { width: 6px; flex: none; padding: 98px 0 0 1px; display: flex; flex-direction: column; gap: 58px; color: #aaa; font-size: 7px; }
.gutter i { width: 1px; height: 5px; margin-left: 4px; background: #aaa; }
.app { flex: 1; min-width: 0; display: flex; flex-direction: column; background: #3a3838; }

.caret { border: 2px solid transparent; border-top-color: #ddd; border-bottom: 0; flex: none; }
.caret.big { border-width: 3px 3px 0; }
.caret.dark { border-top-color: #333; }
.caret.dim { border-top-color: #bbb; }

/* title bar and menu */
.head { display: grid; grid-template-columns: 26px 1fr; grid-template-rows: 20px 12px; background: linear-gradient(#fff 20px, #828282 20px, #646464); }
.logo { grid-row: 1 / 3; margin: 4px 0 1px; gap: 1px; padding-left: 2px; background: linear-gradient(#a3a3a3, #6a6a6a); border: 1px solid #444; }
.mark { width: 17px; height: 19px; }
.titlebar { display: flex; align-items: stretch; padding-top: 4px; color: #222; min-width: 0; }
.qat { display: flex; align-items: center; padding: 0 1px 0 4px; gap: 3px; background: linear-gradient(#a5a5a5, #858585); border: 1px solid #666; border-bottom: 0; }
.qat svg { width: 12px; height: 12px; }
.customize { padding: 5px 0; background: #8d8d8d; }
.title { flex: 1; display: flex; justify-content: center; gap: 12px; line-height: 10px; }
.info { display: flex; align-items: center; gap: 4px; padding-right: 3px; background: linear-gradient(#8e8e8e, #777); color: #eee; border-top: 1px solid #6b6b6b; }
.expand { padding: 0 2px 0 3px; align-self: stretch; }
.side { border: 3px solid transparent; border-left-color: #eee; border-right: 0; }
.search { width: 113px; align-self: stretch; margin-left: -4px; padding: 0 2px; background: #606060; border: 1px solid #484848; font-style: italic; }
.search::placeholder { color: #d0d0d0; opacity: 1; }
.signin { gap: 3px; width: 68px; }
.signin .caret { margin-left: auto; }
.help { margin-left: 9px; }
.help span { width: 11px; border-radius: 50%; border: 1px solid #fff; background: #3c4654; line-height: 9px; font-weight: bold; text-align: center; }
.winctl { display: flex; width: 102px; justify-content: space-between; padding: 0 10px 8px 24px; }
.menubar { display: flex; gap: 15px; padding-left: 9px; align-items: center; color: #f4f4f4; }
.docctl { margin-left: auto; display: flex; padding-right: 1px; }
.docctl svg { width: 10px; height: 10px; }

.tabs { display: flex; align-items: stretch; height: 13px; padding: 2px 0 0 3px; background: #505050; color: #cfcfcf; }
.tabs button { padding: 0 6px; }
.tabs .on { background: linear-gradient(#7b7b7b, #676767); color: #f2f2f2; margin-right: 3px; }
.tabs .mini { gap: 4px; padding-left: 14px; }
.mini svg { width: 8px; height: 6px; }

/* ribbon */
.ribbon { display: grid; grid-template-columns: 142fr 155fr 118fr 171fr 67fr 139fr 43fr 61fr 50fr 42fr; background: #5a5a5a; border-top: 1px solid #686868; }
.panel { display: flex; flex-direction: column; min-width: 0; border-right: 1px solid #4a4a4a; border-left: 1px solid #646464; }
.body { display: flex; height: 48px; padding-top: 2px; }
.body.center { justify-content: center; }
.panel h2 { margin: 0; font: inherit; height: 13px; display: flex; align-items: center; justify-content: center; gap: 4px; background: #515151; border-bottom: 1px solid #484848; }
.panel .with-launch { padding-left: 14px; }
.with-launch .launch { margin-left: auto; margin-right: 2px; }
.with-launch span { margin-left: auto; }
.launch { width: 6px; height: 6px; }
.big { flex: none; flex-direction: column; align-items: center; text-align: center; }
.big svg { width: 20px; height: 20px; margin: 0 0 3px; }
.big .caret { margin-top: 2px; }
.w27 { width: 27px; }
.w34 { width: 34px; }
.w40 { width: 40px; }
.w44 { width: 44px; }
.w47 { width: 47px; }
.col { display: flex; flex-direction: column; padding-left: 1px; }
.col.tight { padding-left: 0; }
.sm { height: 15px; gap: 4px; }
.tight .sm { gap: 3px; }
.split .caret { margin-left: auto; }
.split .sm { padding-right: 6px; }
.grow { flex: 1; min-width: 0; }
.picked { background: #3f68a8; outline: 1px solid #7ea0d6; }
.tools { display: flex; gap: 4px; }
.tools .sm { gap: 3px; }
.combo { display: flex; align-items: center; gap: 2px; flex: 1; min-width: 0; max-height: 13px; margin: 1px 2px 1px 0; padding: 0 2px 0 1px; background: #4c4c4c; border: 1px solid #3b3b3b; outline: 1px solid #686868; outline-offset: -2px; }
.combo svg { width: 10px; height: 10px; }
.combo select { appearance: none; flex: 1; min-width: 0; height: 11px; padding-left: 2px; }
.swatch { width: 9px; height: 9px; background: #fff; border: 1px solid #777; flex: none; }
.prop { display: flex; height: 15px; align-items: center; gap: 1px; }
.prop .combo { height: 13px; padding-left: 4px; }
.prop .wide { padding-left: 6px; }
.wide select { padding-left: 4px; }
.rule { width: 34px; height: 1px; background: #ddd; flex: none; }
.combo .rule + select { padding-left: 0; }

/* drawing tabs */
.files { display: flex; align-items: flex-end; height: 18px; padding-left: 8px; border-bottom: 2px solid #60646e; }
.file { display: flex; width: 79px; height: 14px; margin-right: -2px; align-items: center; justify-content: space-between; padding: 0 11px 0 6px; background: linear-gradient(#606060, #545454); clip-path: polygon(0 100%, 0 40%, 4px 0, 69px 0, 72px 10%, 77px 85%, 100% 100%); color: #b5b5b5; }
.file:first-child { width: 85px; padding-left: 12px; clip-path: polygon(0 100%, 4px 80%, 8px 10%, 10px 0, 77px 0, 80px 10%, 83px 85%, 100% 100%); }
.file.on { background: linear-gradient(#858585, #6a6a6a); color: #eee; clip-path: polygon(0 100%, 5px 0, 69px 0, 72px 10%, 77px 85%, 100% 100%); }
.x { color: #303030; font: 7px/9px "DejaVu Sans", sans-serif; }
.add { margin: 0 0 1px 3px; padding: 1px 4px; background: #555; border-radius: 3px; }
.add svg { width: 8px; height: 9px; }

/* work area */
.work { flex: 1; display: flex; }
.canvas { flex: 1; position: relative; overflow: hidden; background: #212830; }
.drawing { position: absolute; inset: 0; width: 100%; height: 100%; }
.viewctl { position: absolute; left: 2px; top: 4px; display: flex; color: #dfe2e4; }
.ucs { position: absolute; left: 6px; bottom: 5px; width: 50px; height: 48px; }
.cube { position: absolute; right: 11px; top: 9px; width: 70px; height: 72px; display: grid; place-items: center; grid-template: 1fr 2fr 1fr / 1fr 2fr 1fr; color: #c2c7cb; font: bold 11px/12px "Liberation Sans", sans-serif; }
.cube > svg { position: absolute; left: 1px; top: 2px; width: 68px; height: 68px; }
.cube button { position: relative; }
.cube .n { grid-area: 1 / 2; align-self: start; }
.cube .w { grid-area: 2 / 1; justify-self: start; }
.cube .e { grid-area: 2 / 3; justify-self: end; }
.cube .s { grid-area: 3 / 2; align-self: end; }
.cube .top { grid-area: 2 / 2; color: #3b3e41; font-size: 7px; font-weight: normal; }
.wcs { position: absolute; right: 31px; top: 93px; width: 30px; height: 11px; padding-left: 3px; background: #8c9099; border: 1px solid #a3a6ac; border-radius: 3px; color: #4d5158; }
.navbar { position: absolute; right: 3px; top: 120px; width: 20px; height: 132px; background: #63676b; border-radius: 2px; }
.navbar svg { width: 20px; height: 132px; }
.command { position: absolute; left: 199px; right: 199px; bottom: 0; height: 16px; display: flex; align-items: center; gap: 3px; padding-right: 3px; background: #b9b9b9; }
.grip { display: flex; align-items: center; align-self: stretch; gap: 3px; width: 34px; background: linear-gradient(#777, #454545); }
.bar { width: 3px; height: 12px; margin: 0 0 0 1px; background: #888; }
.command input { flex: 1; min-width: 0; font: italic 7px/10px "DejaVu Sans Mono", monospace; }
.command input::placeholder { color: #6a6a6a; opacity: 1; }
.up { border: 2px solid transparent; border-bottom-color: #222; border-top: 0; }

.side-tools { width: 20px; padding: 0 3px; background: #5b5b5b; }
.strip { display: flex; flex-direction: column; align-items: center; gap: 3px; padding: 4px 0 1px; background: #474747; border: 1px solid #3c3c3c; border-top: 2px dotted #777; }

/* bottom bar */
.foot { display: flex; justify-content: space-between; height: 18px; background: #383838; }
.layouts { display: flex; height: 12px; padding-left: 7px; }
.layouts button { padding: 0 8px; margin-right: -2px; background: #505050; color: #c2c2c2; clip-path: polygon(0 0, 100% 0, calc(100% - 6px) 100%, 6px 100%); }
.layouts .on { background: #747474; color: #fff; font-weight: bold; }
.layouts svg { width: 7px; height: 7px; }
.status { display: flex; gap: 1px; padding-left: 1px; background: #777; border-top: 1px solid #666; border-bottom: 2px solid #4a4a4a; }
.status > div { display: flex; align-items: center; gap: 3px; padding: 0 3px; background: #4d4d4d; }
.txt { color: #f0f0f0; }
.blue { color: #278cf0; }
```
